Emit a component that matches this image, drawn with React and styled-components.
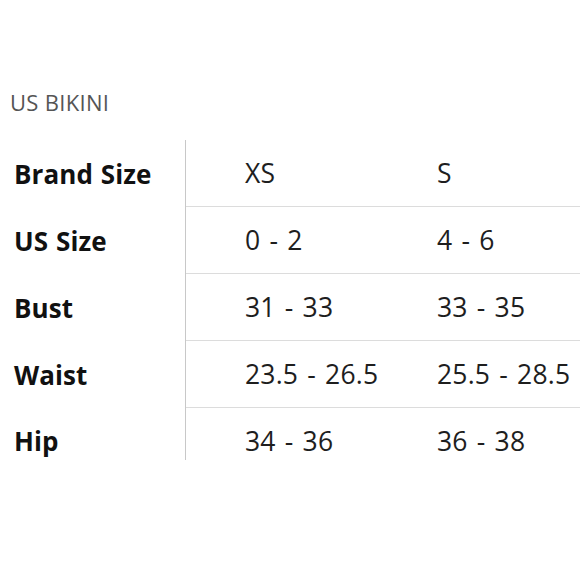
import React from "react";
import styled, { createGlobalStyle } from "styled-components";

const Global = createGlobalStyle`
  html, body {
    margin: 0;
    padding: 0;
    background: #fff;
    font-family: "Open Sans", "Liberation Sans", sans-serif;
  }
`;

const Page = styled.div`
  width: 580px;
  height: 580px;
  overflow: hidden;
  padding-top: 88px;
  box-sizing: border-box;
`;

const Title = styled.div`
  margin-left: 10px;
  font-size: 22px;
  color: #555;
  line-height: 28px;
  letter-spacing: 0.3px;
`;

const Table = styled.div`
  margin-top: 24px;
  display: grid;
  grid-template-columns: 186px 192px 1fr;
`;

const Label = styled.div`
  height: ${p => (p.last ? 52 : 67)}px;
  display: flex;
  align-items: center;
  padding-left: 14px;
  padding-top: ${p => (p.last ? 14 : 0)}px;
  box-sizing: border-box;
  font-size: 26px;
  font-weight: 700;
  color: #111;
  border-right: 1.5px solid #c8c8c8;
  letter-spacing: 0.1px;
  word-spacing: 1px;
`;

const Cell = styled.div`
  height: ${p => (p.last ? 52 : 67)}px;
  display: flex;
  align-items: center;
  padding-left: 59px;
  padding-top: ${p => (p.last ? 14 : 0)}px;
  box-sizing: border-box;
  font-size: 26.5px;
  color: #1e1e1e;
  border-bottom: ${p => (p.last ? "none" : "1.5px solid #dcdcdc")};
  white-space: nowrap;
  word-spacing: 2px;
  letter-spacing: 0.2px;
`;

const rows = [
  ["Brand Size", "XS", "S"],
  ["US Size", "0 - 2", "4 - 6"],
  ["Bust", "31 - 33", "33 - 35"],
  ["Waist", "23.5 - 26.5", "25.5 - 28.5"],
  ["Hip", "34 - 36", "36 - 38"],
];

export default function App() {
  return (
    <Page>
      <Global />
      <Title>US BIKINI</Title>
      <Table>
        {rows.map((r, i) => {
          const last = i === rows.length - 1;
          return (
            <React.Fragment key={r[0]}>
              <Label last={last}>{r[0]}</Label>
              <Cell last={last}>{r[1]}</Cell>
              <Cell last={last}>{r[2]}</Cell>
            </React.Fragment>
          );
        })}
      </Table>
    </Page>
  );
}
